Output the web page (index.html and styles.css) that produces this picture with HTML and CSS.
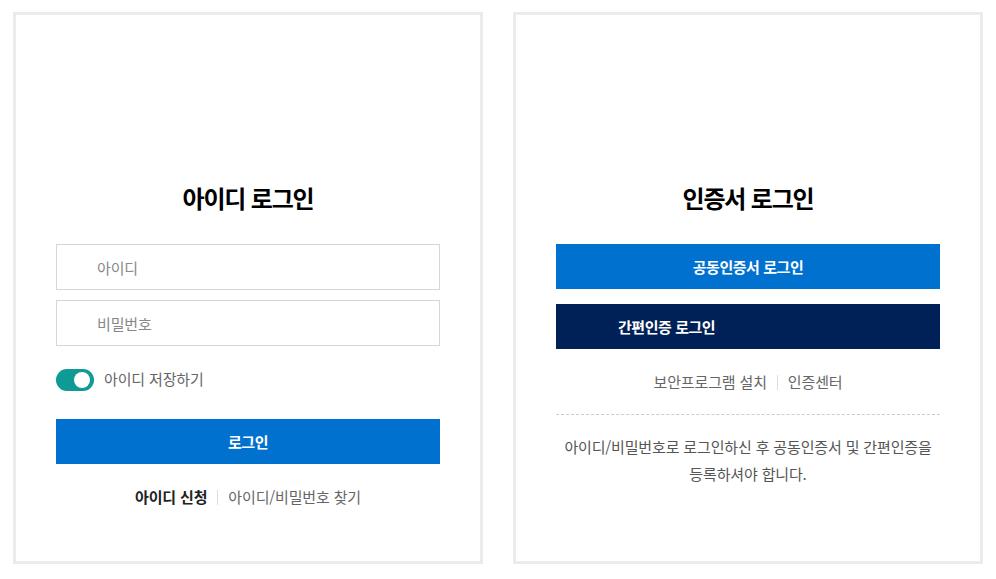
FILE: index.html
```html
<!DOCTYPE html>
<html lang="ko">
<head>
<meta charset="utf-8">
<title>로그인</title>
<link rel="stylesheet" href="styles.css">
</head>
<body>
<div class="wrap">
  <section class="panel">
    <h2 class="title">아이디 로그인</h2>
    <div class="field"><span class="ph">아이디</span></div>
    <div class="field gap"><span class="ph">비밀번호</span></div>
    <label class="save">
      <span class="toggle"><span class="knob"></span></span>
      <span class="save-text">아이디 저장하기</span>
    </label>
    <div class="btn btn-blue login">로그인</div>
    <div class="links">
      <span class="strong">아이디 신청</span>
      <span class="sep"></span>
      <span>아이디/비밀번호 찾기</span>
    </div>
  </section>
  <section class="panel">
    <h2 class="title">인증서 로그인</h2>
    <div class="btn btn-blue">공동인증서 로그인</div>
    <div class="btn btn-navy">간편인증 로그인</div>
    <div class="links links-cert">
      <span>보안프로그램 설치</span>
      <span class="sep"></span>
      <span>인증센터</span>
    </div>
    <hr class="dash">
    <p class="note">아이디/비밀번호로 로그인하신 후 공동인증서 및 간편인증을<br>등록하셔야 합니다.</p>
  </section>
</div>
</body>
</html>
```

FILE: styles.css
```css
* { box-sizing: border-box; }
html, body { margin: 0; padding: 0; background: #fff; }
body {
  font-family: "Noto Sans CJK KR", "Noto Sans", sans-serif;
  color: #666;
  font-size: 15px;
  letter-spacing: -0.01em;
}
.wrap {
  display: flex;
  gap: 30px;
  padding: 12px 13px;
}
.panel {
  width: 470px;
  height: 552px;
  border: 3px solid #ebebeb;
  padding: 167px 40px 0;
  display: flex;
  flex-direction: column;
}
.title {
  margin: 0 0 30px;
  font-size: 24px;
  line-height: 32px;
  font-weight: 700;
  color: #000;
  text-align: center;
  letter-spacing: -0.05em;
}
.field {
  height: 46px;
  border: 1px solid #d6d6d6;
  padding-left: 40px;
  display: flex;
  align-items: center;
}
.field.gap { margin-top: 10px; }
.ph { color: #888; font-size: 15px; }
.save {
  margin-top: 23px;
  display: flex;
  align-items: center;
  gap: 10px;
  height: 22px;
}
.toggle {
  width: 38px;
  height: 22px;
  border-radius: 11px;
  background: #0e9a95;
  display: flex;
  align-items: center;
  justify-content: flex-end;
  padding-right: 4px;
}
.knob {
  width: 16px;
  height: 16px;
  border-radius: 50%;
  background: #fff;
}
.save-text { color: #666; line-height: 20px; margin-top: -2px; }
.btn {
  height: 45px;
  display: flex;
  align-items: center;
  justify-content: center;
  color: #fff;
  font-weight: 700;
  font-size: 15px;
  letter-spacing: -0.03em;
}
.btn-blue { background: #0071ce; }
.btn-navy { background: #002157; margin-top: 15px; justify-content: flex-start; padding-left: 62px; }
.login { margin-top: 28px; }
.links {
  margin-top: 22px;
  display: flex;
  justify-content: center;
  align-items: center;
  gap: 10px;
  line-height: 22px;
  color: #666;
}
.links .strong { color: #222; font-weight: 700; }
.sep { width: 1px; height: 15px; background: #ddd; }
.dash {
  margin: 21px 0 0;
  border: 0;
  border-top: 1px dashed #ccc;
  height: 0;
}
.note {
  margin: 18px 0 0;
  text-align: center;
  line-height: 27px;
  color: #555;
}
```
